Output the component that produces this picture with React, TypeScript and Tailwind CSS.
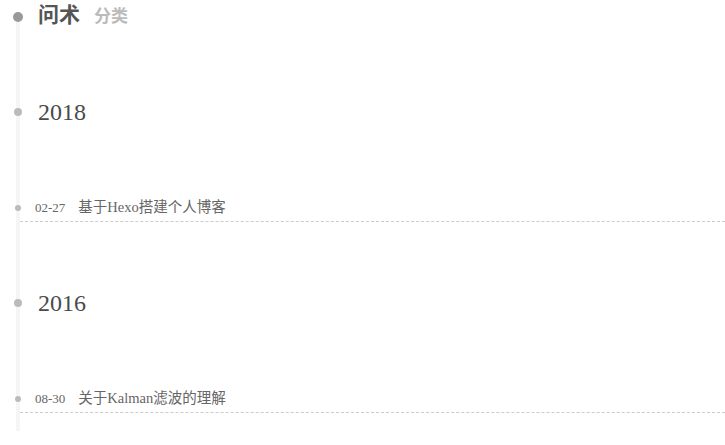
const font = {
  fontFamily: '"Liberation Serif", "Noto Sans CJK SC", serif',
};

function YearRow({ year, className }: { year: string; className: string }) {
  return (
    <div className={`flex items-center h-[40px] ${className}`}>
      <span className="-ml-[6px] w-2 h-2 rounded-full bg-[#bbb] shrink-0" />
      <h2 className="ml-4 text-[24px] leading-none text-[#4a4a4a]">{year}</h2>
    </div>
  );
}

function PostRow({ date, title, className }: { date: string; title: string; className: string }) {
  return (
    <div className={`flex items-center h-[27px] border-b border-dashed border-[#ccc] ${className}`}>
      <span className="-ml-[5px] w-[6px] h-[6px] rounded-full bg-[#bbb] shrink-0" />
      <span className="ml-[14px] text-[13px] text-[#666]">{date}</span>
      <a className="ml-[13px] text-[14.5px] text-[#666]">{title}</a>
    </div>
  );
}

export default function App() {
  return (
    <div className="w-[725px] h-[445px] bg-white overflow-hidden" style={font}>
      <div className="flex items-end h-[22px] ml-[13px]">
        <span className="w-[10px] h-[10px] rounded-full bg-[#999] shrink-0" />
        <h1 className="ml-[15px] -mb-[5px] leading-5 text-[21px] font-bold text-[#555]">
          问术
          <small className="ml-[14px] text-[17px] font-bold text-[#bbb]">分类</small>
        </h1>
      </div>
      <div className="flex flex-col ml-4 border-l-4 border-[#f5f5f5] pt-[70px] pb-[18px]">
        <YearRow year="2018" className="" />
        <PostRow date="02-27" title="基于Hexo搭建个人博客" className="mt-[63px]" />
        <YearRow year="2016" className="mt-[61px]" />
        <PostRow date="08-30" title="关于Kalman滤波的理解" className="mt-[63px]" />
      </div>
    </div>
  );
}
